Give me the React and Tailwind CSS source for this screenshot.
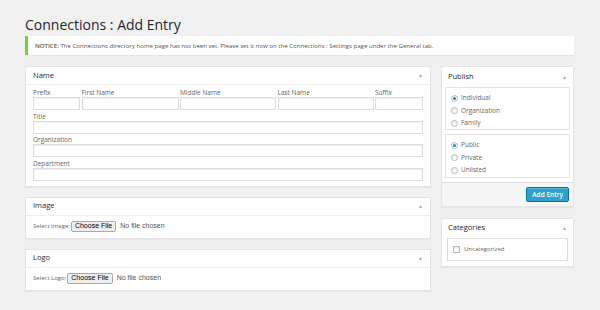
import React from 'react';

const font = { fontFamily: '"Open Sans", "Noto Sans", sans-serif' };

const Arrow = () => (
  <span className="text-[5px] text-[#aaa] leading-none">▲</span>
);

const Panel = ({ title, children, className = '' }) => (
  <div className={`bg-white border border-[#e5e5e5] shadow-[0_1px_1px_rgba(0,0,0,0.04)] ${className}`}>
    <div className="h-[18px] flex items-center justify-between px-[7px] border-b border-[#eee]">
      <span className="text-[7.5px] text-[#23282d]">{title}</span>
      <Arrow />
    </div>
    {children}
  </div>
);

const Field = ({ label, className = '' }) => (
  <div className={`flex flex-col ${className}`}>
    <span className="text-[6.5px] text-[#666] leading-[9px] h-[9px]">{label}</span>
    <div className="h-[13px] bg-white border border-[#ddd] shadow-[inset_0_1px_2px_rgba(0,0,0,0.07)]" />
  </div>
);

const Radio = ({ label, checked }) => (
  <div className="flex items-center gap-[3px] h-[12.5px]">
    <span className="w-[7px] h-[7px] rounded-full border border-[#b4b9be] bg-white flex items-center justify-center shadow-[inset_0_1px_2px_rgba(0,0,0,0.1)]">
      {checked && <span className="w-[3px] h-[3px] rounded-full bg-[#1e8cbe]" />}
    </span>
    <span className="text-[6.5px] text-[#666]">{label}</span>
  </div>
);

const FileRow = ({ label }) => (
  <div className="flex items-center h-[22px] px-[7px]">
    <span className="text-[6px] text-[#666]">{label}</span>
    <span
      className="ml-[1px] h-[11px] px-[3px] flex items-center border border-[#aaa] rounded-[2px] bg-[#efefef] text-[7px] text-black"
      style={{ fontFamily: '"Liberation Sans", Arial, sans-serif' }}
    >
      Choose File
    </span>
    <span
      className="ml-[4px] text-[7px] text-[#555]"
      style={{ fontFamily: '"Liberation Sans", Arial, sans-serif' }}
    >
      No file chosen
    </span>
  </div>
);

export default function App() {
  return (
    <div className="w-[600px] h-[310px] bg-[#f1f1f1] overflow-hidden pl-[25px] pr-[26px]" style={font}>
      <h1 className="pt-[15px] h-[36px] text-[14px] leading-[20px] text-[#23282d]">Connections : Add Entry</h1>
      <div className="h-[19px] bg-white border-l-[3px] border-[#7ad03a] flex items-center pl-[7px] shadow-[0_1px_1px_rgba(0,0,0,0.04)]">
        <span className="text-[6.1px] text-[#555]">
          <b className="font-semibold">NOTICE:</b> The Connections directory home page has not been set. Please set it now on the Connections : Settings page under the General tab.
        </span>
      </div>

      <div className="flex gap-[10px] mt-[11px]">
        <div className="w-[406px] flex flex-col gap-[10px]">
          <Panel title="Name">
            <div className="px-[7px] pt-[3px] pb-[5px] flex flex-col gap-[1.5px]">
              <div className="flex gap-[1.5px]">
                <Field label="Prefix" className="w-[47px]" />
                <Field label="First Name" className="w-[97px]" />
                <Field label="Middle Name" className="w-[96px]" />
                <Field label="Last Name" className="w-[96px]" />
                <Field label="Suffix" className="w-[48px]" />
              </div>
              <Field label="Title" />
              <Field label="Organization" />
              <Field label="Department" />
            </div>
          </Panel>
          <Panel title="Image">
            <FileRow label="Select Image:" />
          </Panel>
          <Panel title="Logo">
            <FileRow label="Select Logo:" />
          </Panel>
        </div>

        <div className="w-[133px] flex flex-col gap-[11px]">
          <div className="bg-white border border-[#e5e5e5] shadow-[0_1px_1px_rgba(0,0,0,0.04)]">
            <div className="h-[20px] flex items-center justify-between px-[6px]">
              <span className="text-[7.5px] text-[#23282d]">Publish</span>
              <Arrow />
            </div>
            <div className="mx-[3px] border border-[#e5e5e5] px-[5px] pt-[4px] pb-[3px] h-[43px]">
              <Radio label="Individual" checked />
              <Radio label="Organization" />
              <Radio label="Family" />
            </div>
            <div className="mx-[3px] mt-[4px] border border-[#e5e5e5] px-[5px] pt-[4px] pb-[3px] h-[44px]">
              <Radio label="Public" checked />
              <Radio label="Private" />
              <Radio label="Unlisted" />
            </div>
            <div className="mt-[4px] bg-[#f5f5f5] border-t border-[#ddd] h-[24px] flex items-center justify-end pr-[4px]">
              <span className="h-[15px] px-[5px] flex items-center bg-[#2ea2cc] border border-[#0074a2] rounded-[2px] text-[6.5px] font-semibold text-white shadow-[inset_0_1px_0_rgba(120,200,230,0.5)]">
                Add Entry
              </span>
            </div>
          </div>

          <div className="bg-white border border-[#e5e5e5] shadow-[0_1px_1px_rgba(0,0,0,0.04)]">
            <div className="h-[18px] flex items-center justify-between px-[6px]">
              <span className="text-[7.5px] text-[#23282d]">Categories</span>
              <Arrow />
            </div>
            <div className="mx-[5px] mt-[1px] mb-[5px] border border-[#ddd] h-[23px] flex items-center px-[5px] gap-[4px]">
              <span className="w-[7px] h-[7px] border border-[#b4b9be] bg-white shadow-[inset_0_1px_2px_rgba(0,0,0,0.1)]" />
              <span className="text-[6px] text-[#666]">Uncategorized</span>
            </div>
          </div>
        </div>
      </div>
    </div>
  );
}
